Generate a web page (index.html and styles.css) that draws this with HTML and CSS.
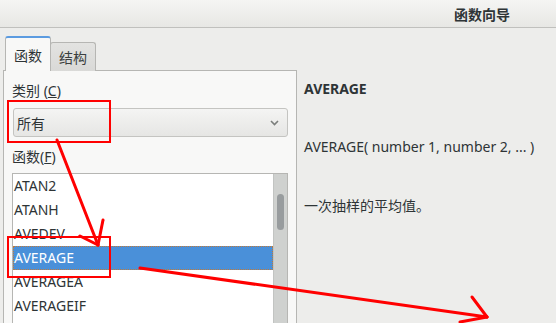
FILE: index.html
```html
<!DOCTYPE html>
<html lang="zh-CN">
<head>
  <meta charset="UTF-8" />
  <title>函数向导</title>
  <link rel="stylesheet" href="styles.css">
</head>
<body>

  <header class="titlebar">
    <span class="title">函数向导</span>
  </header>

  <main class="wizard">
    <section class="left-col">
      <div class="tabs">
        <div class="tab active">函数</div>
        <div class="tab">结构</div>
      </div>

      <div class="tab-panel">
        <div class="field-label">类别 (<u>C</u>)</div>
        <div class="combo">
          <span>所有</span>
          <svg class="chevron" width="9" height="6" viewBox="0 0 9 6">
            <path d="M1 1 L4.5 4.5 L8 1" fill="none" stroke="#7b7e7c" stroke-width="1.6" />
          </svg>
        </div>

        <div class="field-label fn-label">函数(<u>F</u>)</div>
        <div class="func-list">
          <ul class="rows">
            <li>ATAN2</li>
            <li>ATANH</li>
            <li>AVEDEV</li>
            <li class="selected">AVERAGE</li>
            <li>AVERAGEA</li>
            <li>AVERAGEIF</li>
          </ul>
          <div class="scrollbar">
            <div class="thumb"></div>
          </div>
        </div>
      </div>
    </section>

    <section class="info">
      <div class="fn-name">AVERAGE</div>
      <div class="fn-sig">AVERAGE( number 1, number 2, ... )</div>
      <div class="fn-desc">一次抽样的平均值。</div>
    </section>
  </main>

  <!-- red markup drawn over the screenshot -->
  <svg class="marks" width="556" height="323" viewBox="0 0 556 323">
    <g fill="none" stroke="#ff0000">
      <rect x="8" y="101" width="102" height="41" stroke-width="2" />
      <rect x="8" y="237" width="102" height="40" stroke-width="2" />
      <g stroke-width="3" stroke-linecap="round">
        <line x1="57" y1="140" x2="98" y2="245" />
        <line x1="80" y1="236" x2="98" y2="245" />
        <line x1="103" y1="220" x2="98" y2="245" />
        <line x1="140" y1="268" x2="487" y2="317" />
        <line x1="472" y1="297" x2="487" y2="317" />
        <line x1="460" y1="322" x2="487" y2="317" />
      </g>
    </g>
  </svg>

</body>
</html>
```

FILE: styles.css
```css
body {
  margin: 0;
  width: 556px;
  height: 323px;
  overflow: hidden;
  background-color: #ededeb;
  color: #2e3436;
  font-family: "Noto Sans", "Noto Sans CJK SC", sans-serif;
  font-size: 14px;
}

.titlebar {
  height: 27px;
  border-bottom: 1px solid #c0c0bd;
  background: linear-gradient(#f5f5f3, #e7e7e4);
  display: flex;
  align-items: center;
  justify-content: flex-end;
  padding-right: 46px;
}

.title {
  font-weight: bold;
  font-size: 14px;
}

.wizard {
  display: flex;
  height: 295px;
}

.left-col {
  width: 294px;
  padding-left: 3px;
  padding-top: 8px;
  display: flex;
  flex-direction: column;
}

.tabs {
  display: flex;
  align-items: flex-end;
  padding-left: 2px;
  margin-bottom: -1px;
  position: relative;
  z-index: 1;
}

.tab {
  height: 28px;
  width: 44px;
  border: 1px solid #b6b6b3;
  border-bottom: none;
  border-radius: 3px 3px 0 0;
  background: linear-gradient(#e3e3e1, #d9d9d7);
  display: flex;
  align-items: center;
  justify-content: center;
  color: #3b3f40;
}

.tab.active {
  height: 33px;
  border-top: 2px solid #5b9be0;
  background: #f8f8f7;
  color: #2e3436;
  margin-right: -1px;
}

.tab-panel {
  flex: 1;
  border: 1px solid #b6b6b3;
  border-bottom: none;
  background: #f8f8f7;
  padding: 10px 8px 0 8px;
  display: flex;
  flex-direction: column;
}

.field-label {
  line-height: 20px;
}

.fn-label {
  margin-top: 10px;
}

.combo {
  margin: 7px 0 0 1px;
  height: 27px;
  border: 1px solid #c4c4c1;
  border-radius: 3px;
  background: linear-gradient(#f4f4f3, #e6e6e4);
  display: flex;
  align-items: center;
  justify-content: space-between;
  padding: 0 8px 0 3px;
}

.chevron {
  display: block;
}

.func-list {
  margin-top: 6px;
  flex: 1;
  border: 1px solid #b6b6b3;
  border-bottom: none;
  background: #ffffff;
  display: flex;
}

.rows {
  list-style: none;
  margin: 0;
  padding: 0;
  flex: 1;
}

.rows li {
  height: 24px;
  line-height: 24px;
  padding-left: 1px;
}

.rows li.selected {
  background: #4a90d9;
  color: #ffffff;
  outline: 1px dotted #c07a3a;
  outline-offset: -1px;
}

.scrollbar {
  width: 13px;
  background: #cfd1cf;
  border-left: 1px solid #c2c4c2;
  padding-top: 20px;
  display: flex;
  justify-content: center;
}

.thumb {
  width: 7px;
  height: 36px;
  border-radius: 4px;
  background: #989c9e;
}

.info {
  flex: 1;
  padding: 51px 0 0 7px;
}

.fn-name {
  font-weight: bold;
  line-height: 20px;
}

.fn-sig {
  margin-top: 38px;
  line-height: 20px;
}

.fn-desc {
  margin-top: 39px;
  line-height: 20px;
}

.marks {
  position: absolute;
  left: 0;
  top: 0;
}
```
